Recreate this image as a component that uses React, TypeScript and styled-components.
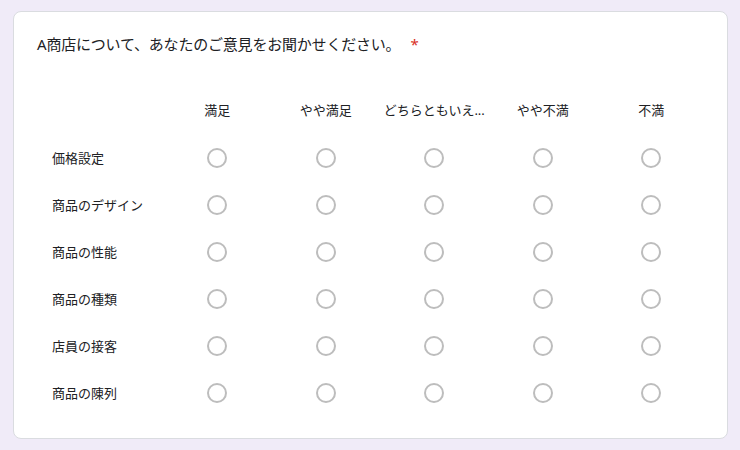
import React from 'react'
import styled, { createGlobalStyle } from 'styled-components'

const GlobalStyle = createGlobalStyle`
  html, body {
    margin: 0;
    padding: 0;
    background: #f0ebf8;
  }
  body {
    font-family: "Noto Sans", "Noto Sans CJK JP", sans-serif;
    color: #202124;
  }
`

const Page = styled.div`
  padding: 11px 12px 11px 13px;
  min-height: 450px;
  box-sizing: border-box;
`

const Card = styled.div`
  background: #fff;
  border: 1px solid #dadce0;
  border-radius: 8px;
  padding: 20px 22px 22px 23px;
`

const Title = styled.div`
  font-size: 15px;
  line-height: 24px;
  letter-spacing: -0.2px;
`

const Required = styled.span`
  color: #d93025;
  margin-left: 10px;
`

const Grid = styled.div`
  margin-top: 28px;
  display: grid;
  grid-template-columns: 126px repeat(5, 108.5px);
  grid-template-rows: 50px repeat(6, 47px);
  align-items: center;
`

const ColHead = styled.div`
  font-size: 13px;
  text-align: center;
  white-space: nowrap;
  overflow: hidden;
`

const RowLabel = styled.div`
  font-size: 13px;
  padding-left: 15px;
  white-space: nowrap;
`

const Cell = styled.div`
  display: flex;
  justify-content: center;
  align-items: center;
`

const Radio = styled.span`
  width: 20px;
  height: 20px;
  box-sizing: border-box;
  border: 2px solid #bdbdbd;
  border-radius: 50%;
  display: block;
`

const columns = ['満足', 'やや満足', 'どちらともいえ...', 'やや不満', '不満']
const rows = ['価格設定', '商品のデザイン', '商品の性能', '商品の種類', '店員の接客', '商品の陳列']

export default function App() {
  return (
    <>
      <GlobalStyle />
      <Page>
        <Card>
          <Title>
            A商店について、あなたのご意見をお聞かせください。
            <Required>*</Required>
          </Title>
          <Grid>
            <div />
            {columns.map((c) => (
              <ColHead key={c}>{c}</ColHead>
            ))}
            {rows.map((r) => (
              <React.Fragment key={r}>
                <RowLabel>{r}</RowLabel>
                {columns.map((c) => (
                  <Cell key={c}>
                    <Radio />
                  </Cell>
                ))}
              </React.Fragment>
            ))}
          </Grid>
        </Card>
      </Page>
    </>
  )
}
